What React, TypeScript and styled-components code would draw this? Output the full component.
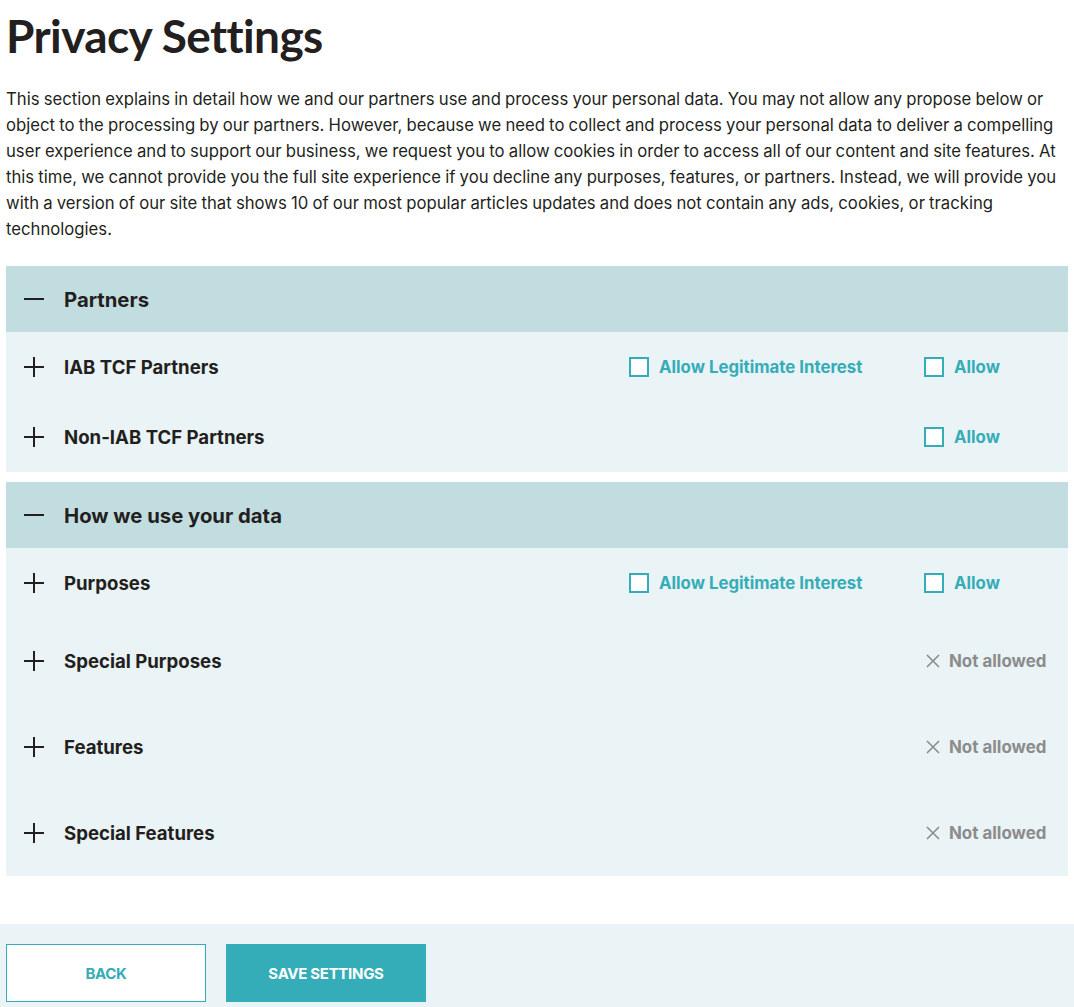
import React from "react";
import styled, { createGlobalStyle } from "styled-components";

const Global = createGlobalStyle`
  html, body { margin: 0; padding: 0; background: #fff; }
  body { font-family: Inter, "Liberation Sans", sans-serif; color: #231f20; }
  * { box-sizing: border-box; }
`;

const TEAL = "#35adb8";

const Page = styled.div`
  display: flex;
  flex-direction: column;
  min-height: 1007px;
`;

const Main = styled.main`
  padding: 0 6px;
  display: flex;
  flex-direction: column;
`;

const Title = styled.h1`
  font-family: Lato, "Liberation Sans", sans-serif;
  font-weight: 700;
  font-size: 46px;
  line-height: 56px;
  margin: 8px 0 22px;
  letter-spacing: -0.6px;
  color: #231f20;
`;

const Intro = styled.p`
  font-size: 16.7px;
  line-height: 26px;
  word-spacing: -0.5px;
  margin: 0 0 24px;
  color: #231f20;
`;

const Section = styled.section`
  background: #eaf3f5;
  margin-bottom: 10px;
`;

const SectionHeader = styled.div`
  background: #c2dde0;
  height: 66px;
  display: flex;
  align-items: center;
  padding-left: 18px;
  gap: 20px;
  font-weight: 700;
  font-size: 20.3px;
`;

const Row = styled.div<{ $tall?: boolean }>`
  height: ${(p) => (p.$tall ? 86 : 70)}px;
  display: flex;
  align-items: center;
  padding-left: 18px;
  padding-right: 20px;
`;

const RowLabel = styled.div`
  display: flex;
  align-items: center;
  gap: 20px;
  font-weight: 700;
  font-size: 18.6px;
  flex: 1;
`;

const LegitCol = styled.div`
  width: 295px;
  display: flex;
`;

const AllowCol = styled.div`
  width: 124px;
  display: flex;
`;

const CheckLabel = styled.label`
  display: flex;
  align-items: center;
  gap: 10px;
  color: ${TEAL};
  font-weight: 700;
  font-size: 16.8px;
  cursor: pointer;
`;

const Box = styled.span`
  width: 20px;
  height: 20px;
  border: 2px solid ${TEAL};
  background: #fff;
  display: inline-block;
`;

const NotAllowed = styled.div`
  display: flex;
  align-items: center;
  gap: 9px;
  padding-left: 2px;
  color: #8c8c8c;
  font-weight: 700;
  font-size: 16.9px;
`;

const Footer = styled.footer`
  margin-top: 38px;
  background: #eaf3f5;
  padding: 20px 6px;
  display: flex;
  gap: 20px;
  flex: 1;
`;

const Button = styled.button<{ $primary?: boolean }>`
  width: 200px;
  height: 58px;
  font-family: Inter, "Liberation Sans", sans-serif;
  font-weight: 700;
  font-size: 15px;
  text-transform: uppercase;
  letter-spacing: -0.3px;
  border: 1px solid ${TEAL};
  background: ${(p) => (p.$primary ? TEAL : "#fff")};
  color: ${(p) => (p.$primary ? "#fff" : TEAL)};
  cursor: pointer;
`;

const Plus = () => (
  <svg width="20" height="20" viewBox="0 0 20 20">
    <path d="M0 10 H20 M10 0 V20" stroke="#231f20" strokeWidth="2" />
  </svg>
);
const Minus = () => (
  <svg width="20" height="20" viewBox="0 0 20 20">
    <path d="M0 10 H20" stroke="#231f20" strokeWidth="2" />
  </svg>
);
const Cross = () => (
  <svg width="14" height="14" viewBox="0 0 14 14">
    <path d="M1 1 L13 13 M13 1 L1 13" stroke="#8c8c8c" strokeWidth="1.6" />
  </svg>
);

type Kind = "both" | "allow" | "none";

const Check = ({ text }: { text: string }) => (
  <CheckLabel>
    <Box />
    {text}
  </CheckLabel>
);

const Item = ({ label, kind }: { label: string; kind: Kind }) => (
  <Row $tall={kind === "none"}>
    <RowLabel>
      <Plus />
      {label}
    </RowLabel>
    {kind === "both" && (
      <LegitCol>
        <Check text="Allow Legitimate Interest" />
      </LegitCol>
    )}
    <AllowCol>
      {kind === "none" ? (
        <NotAllowed>
          <Cross />
          Not allowed
        </NotAllowed>
      ) : (
        <Check text="Allow" />
      )}
    </AllowCol>
  </Row>
);

export default function App() {
  return (
    <Page>
      <Global />
      <Main>
        <Title>Privacy Settings</Title>
        <Intro>
          This section explains in detail how we and our partners use and process your personal data. You may not
          allow any propose below or object to the processing by our partners. However, because we need to collect and
          process your personal data to deliver a compelling user experience and to support our business, we request
          you to allow cookies in order to access all of our content and site features. At this time, we cannot
          provide you the full site experience if you decline any purposes, features, or partners. Instead, we will
          provide you with a version of our site that shows 10 of our most popular articles updates and does not
          contain any ads, cookies, or tracking technologies.
        </Intro>
        <Section>
          <SectionHeader>
            <Minus />
            Partners
          </SectionHeader>
          <Item label="IAB TCF Partners" kind="both" />
          <Item label="Non-IAB TCF Partners" kind="allow" />
        </Section>
        <Section>
          <SectionHeader>
            <Minus />
            How we use your data
          </SectionHeader>
          <Item label="Purposes" kind="both" />
          <Item label="Special Purposes" kind="none" />
          <Item label="Features" kind="none" />
          <Item label="Special Features" kind="none" />
        </Section>
      </Main>
      <Footer>
        <Button>Back</Button>
        <Button $primary>Save Settings</Button>
      </Footer>
    </Page>
  );
}
